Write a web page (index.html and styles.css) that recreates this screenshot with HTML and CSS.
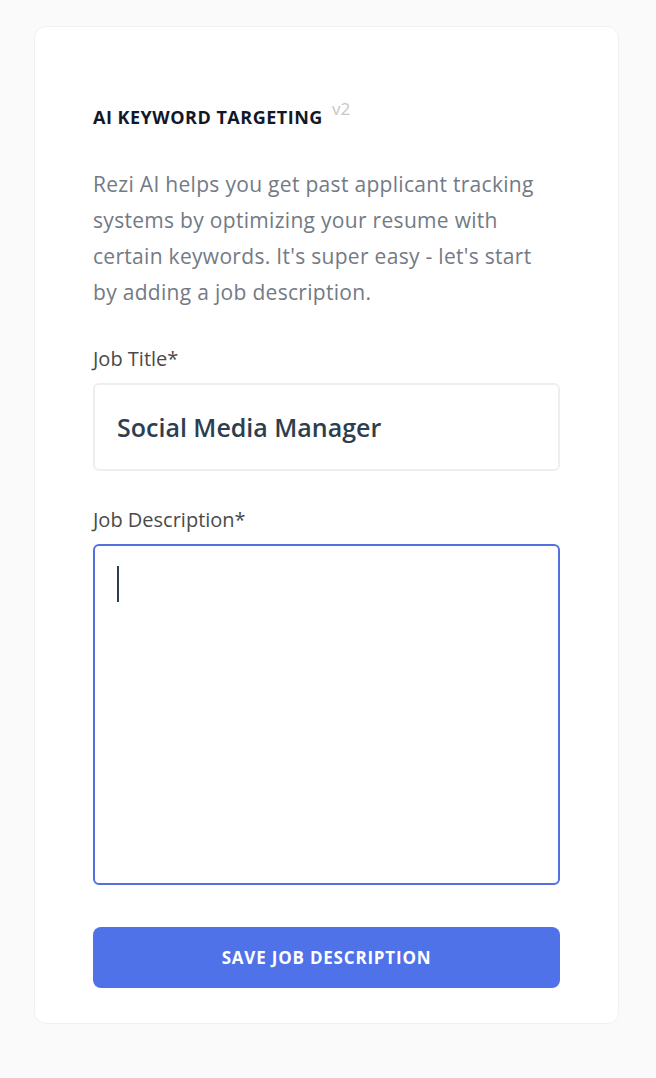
FILE: index.html
```html
<!DOCTYPE html>
<html lang="en">
<head>
  <meta charset="UTF-8">
  <meta name="viewport" content="width=device-width, initial-scale=1.0">
  <title>AI Keyword Targeting</title>
  <link rel="stylesheet" href="styles.css">
</head>
<body>
  <div class="card">
    <h2 class="title">AI Keyword Targeting <sup class="version">v2</sup></h2>
    <p class="intro">Rezi AI helps you get past applicant tracking systems by optimizing your resume with certain keywords. It's super easy - let's start by adding a job description.</p>

    <form class="form">
      <div class="form-group">
        <label for="jobTitle">Job Title*</label>
        <div class="field" id="jobTitle">Social Media Manager</div>
      </div>

      <div class="form-group">
        <label for="jobDesc">Job Description*</label>
        <div class="field field-area" id="jobDesc"><span class="caret"></span></div>
      </div>

      <button type="button" class="save-btn">Save Job Description</button>
    </form>
  </div>
</body>
</html>
```

FILE: styles.css
```css
body {
  margin: 0;
  background-color: #fafafa;
  font-family: "Open Sans", Lato, sans-serif;
}
.card {
  margin: 26px 37px 0 34px;
  height: 998px;
  box-sizing: border-box;
  background: #fff;
  border: 1px solid #f0f0f0;
  border-radius: 12px;
  padding: 70px 58px 0 58px;
}
.title {
  margin: 0;
  font-size: 18px;
  font-weight: 700;
  text-transform: uppercase;
  color: #111827;
  line-height: 24px;
  letter-spacing: 0.5px;
}
.version {
  font-size: 17px;
  font-weight: 400;
  color: #c6c6c6;
  text-transform: none;
  letter-spacing: 0;
  vertical-align: 9px;
  margin-left: 4px;
}
.intro {
  margin: 37px 0 0;
  font-size: 21px;
  line-height: 36px;
  letter-spacing: 0.3px;
  color: #737a85;
}
.form {
  margin-top: 35px;
}
.form-group {
  margin-bottom: 35px;
}
label {
  display: block;
  font-size: 20px;
  color: #4a4a4a;
  margin-bottom: 10px;
  line-height: 28px;
}
.field {
  border: 2px solid #eeeeee;
  border-radius: 6px;
  height: 88px;
  box-sizing: border-box;
  padding: 0 22px;
  display: flex;
  align-items: center;
  font-size: 25px;
  font-weight: 600;
  color: #2c3e50;
}
.field-area {
  height: 341px;
  border-color: #5271de;
  align-items: flex-start;
  padding-top: 20px;
}
.caret {
  display: block;
  width: 2px;
  height: 36px;
  background: #2c3e50;
}
.save-btn {
  display: block;
  width: 100%;
  height: 61px;
  margin-top: 42px;
  border: none;
  border-radius: 8px;
  background-color: #4f72e8;
  color: #fff;
  font-family: inherit;
  font-size: 17px;
  font-weight: 700;
  text-transform: uppercase;
  letter-spacing: 0.8px;
  cursor: pointer;
}
```
